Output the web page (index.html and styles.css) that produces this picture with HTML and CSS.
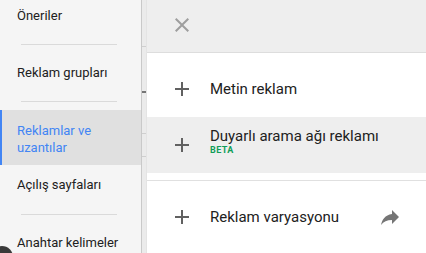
FILE: index.html
```html
<!DOCTYPE html>
<html lang="tr">
<head>
    <meta charset="UTF-8">
    <meta name="viewport" content="width=device-width, initial-scale=1.0">
    <title>Reklamlar ve uzantılar</title>
    <link rel="stylesheet" href="styles.css">
</head>
<body>
    <div class="layout">
        <nav class="sidebar">
            <div class="nav-item nav-item-top">Öneriler</div>
            <div class="nav-sep"></div>
            <div class="nav-item">Reklam grupları</div>
            <div class="nav-sep"></div>
            <div class="nav-item nav-item-active">Reklamlar ve<br>uzantılar</div>
            <div class="nav-item nav-item-after">Açılış sayfaları</div>
            <div class="nav-sep"></div>
            <div class="nav-item">Anahtar kelimeler</div>
            <span class="fab"></span>
        </nav>

        <div class="gutter">
            <span class="mark mark-1"></span>
            <span class="mark mark-dark"></span>
            <span class="mark mark-3"></span>
            <span class="mark mark-4"></span>
        </div>

        <section class="panel">
            <header class="panel-header">
                <button class="icon-btn close-btn" aria-label="Kapat">
                    <svg viewBox="0 0 24 24" width="24" height="24"><path d="M19 6.41L17.59 5 12 10.59 6.41 5 5 6.41 10.59 12 5 17.59 6.41 19 12 13.41 17.59 19 19 17.59 13.41 12z"/></svg>
                </button>
            </header>

            <ul class="menu">
                <li class="menu-item">
                    <svg class="plus" viewBox="0 0 24 24" width="24" height="24"><path d="M19 13h-6v6h-2v-6H5v-2h6V5h2v6h6v2z"/></svg>
                    <span class="menu-label">Metin reklam</span>
                </li>
                <li class="menu-item menu-item-active">
                    <svg class="plus" viewBox="0 0 24 24" width="24" height="24"><path d="M19 13h-6v6h-2v-6H5v-2h6V5h2v6h6v2z"/></svg>
                    <span class="menu-stack">
                        <span class="menu-label">Duyarlı arama ağı reklamı</span>
                        <span class="badge">BETA</span>
                    </span>
                </li>
            </ul>

            <ul class="menu menu-last">
                <li class="menu-item">
                    <svg class="plus" viewBox="0 0 24 24" width="24" height="24"><path d="M19 13h-6v6h-2v-6H5v-2h6V5h2v6h6v2z"/></svg>
                    <span class="menu-label">Reklam varyasyonu</span>
                    <svg class="share" viewBox="0 0 24 24" width="24" height="24"><path d="M14 9V5l7 7-7 7v-4.1c-5 0-8.5 1.6-11 5.1 1-5 4-10 11-11z"/></svg>
                </li>
            </ul>
        </section>
    </div>
</body>
</html>
```

FILE: styles.css
```css
body {
    margin: 0;
    height: 253px;
    overflow: hidden;
    font-family: Roboto, "Liberation Sans", Arial, sans-serif;
    background-color: #fff;
}

.layout {
    display: flex;
    height: 253px;
}

/* left navigation */
.sidebar {
    position: relative;
    width: 141px;
    flex-shrink: 0;
    background-color: #f5f5f5;
    overflow: hidden;
}

.nav-item {
    display: flex;
    align-items: center;
    height: 56px;
    padding: 0 17px;
    box-sizing: border-box;
    font-size: 13px;
    line-height: 16px;
    color: #212121;
}

.nav-item-top {
    height: 32px;
    margin-bottom: 12px;
}

.nav-item-active {
    height: 55px;
    margin-top: 8px;
    padding-top: 3px;
    line-height: 17px;
    background-color: #e0e0e0;
    color: #4285f4;
    box-shadow: inset 2px 0 0 #4285f4;
}

.nav-item-after {
    height: 49px;
    padding-bottom: 9px;
}

.nav-sep {
    height: 1px;
    margin: 0 24px 0 21px;
    background-color: #dadada;
}

.fab {
    position: absolute;
    left: -9px;
    top: 246px;
    width: 22px;
    height: 22px;
    border-radius: 50%;
    background-color: #3a3a3a;
}

/* strip between nav and panel */
.gutter {
    display: flex;
    flex-direction: column;
    width: 4px;
    flex-shrink: 0;
    border-left: 1px solid #c9c9c9;
    background-color: #ebebeb;
}

.mark {
    display: block;
    height: 1px;
    background-color: #cfcfcf;
}

.mark-1 { margin-top: 46px; }
.mark-dark { margin-top: 44px; height: 2px; background-color: #757575; }
.mark-3 { margin-top: 40px; }
.mark-4 { margin-top: 22px; }

/* add panel */
.panel {
    flex: 1;
    background-color: #fff;
    border-left: 1px solid #e4e4e4;
}

.panel-header {
    display: flex;
    align-items: flex-start;
    height: 53px;
    padding: 13px 23px 0;
    box-sizing: border-box;
    background-color: #eeeeee;
    border-bottom: 1px solid #dddddd;
}

.icon-btn {
    display: flex;
    padding: 0;
    border: none;
    background: none;
    cursor: pointer;
}

.close-btn svg {
    fill: #9e9e9e;
}

.menu {
    margin: 0;
    padding: 8px 0 7px;
    list-style: none;
    border-bottom: 1px solid #e0e0e0;
}

.menu-last {
    border-bottom: none;
}

.menu-item {
    display: flex;
    align-items: center;
    gap: 16px;
    height: 56px;
    padding: 0 24px 0 23px;
    cursor: pointer;
}

.menu-item-active {
    background-color: #eeeeee;
}

.plus {
    flex-shrink: 0;
    fill: #616161;
}

.menu-label {
    font-size: 15px;
    line-height: 18px;
    color: #212121;
}

.menu-stack {
    display: flex;
    flex-direction: column;
    padding-bottom: 8px;
}

.badge {
    font-size: 9px;
    line-height: 11px;
    font-weight: 700;
    letter-spacing: 0.4px;
    color: #0f9d58;
}

.share {
    margin-left: auto;
    fill: #757575;
}
```
